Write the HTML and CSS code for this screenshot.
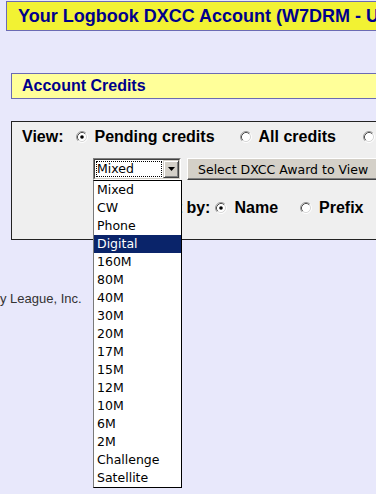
FILE: index.html
```html
<!DOCTYPE html>
<html>
<head>
<meta charset="utf-8">
<link rel="stylesheet" href="styles.css">
</head>
<body>
<div class="title">Your Logbook DXCC Account (W7DRM - U</div>
<div class="bar">Account Credits</div>
<div class="panel">
  <div class="row view-row">
    <span class="lbl">View:</span>
    <label class="opt opt-pending">
      <svg class="radio" width="12" height="12" viewBox="0 0 12 12"><circle cx="6" cy="6" r="4.5" fill="#fff"/><path d="M2.11 9.89A5.5 5.5 0 0 1 9.89 2.11" fill="none" stroke="#9a9a9a"/><path d="M9.89 2.11A5.5 5.5 0 0 1 2.11 9.89" fill="none" stroke="#fff"/><path d="M2.82 9.18A4.5 4.5 0 0 1 9.18 2.82" fill="none" stroke="#505050"/><path d="M9.18 2.82A4.5 4.5 0 0 1 2.82 9.18" fill="none" stroke="#d8d8d8"/><circle cx="6" cy="6" r="1.8" fill="#000"/></svg>
      <span>Pending credits</span>
    </label>
    <label class="opt opt-all">
      <svg class="radio" width="12" height="12" viewBox="0 0 12 12"><circle cx="6" cy="6" r="4.5" fill="#fff"/><path d="M2.11 9.89A5.5 5.5 0 0 1 9.89 2.11" fill="none" stroke="#9a9a9a"/><path d="M9.89 2.11A5.5 5.5 0 0 1 2.11 9.89" fill="none" stroke="#fff"/><path d="M2.82 9.18A4.5 4.5 0 0 1 9.18 2.82" fill="none" stroke="#505050"/><path d="M9.18 2.82A4.5 4.5 0 0 1 2.82 9.18" fill="none" stroke="#d8d8d8"/></svg>
      <span>All credits</span>
    </label>
    <label class="opt">
      <svg class="radio" width="12" height="12" viewBox="0 0 12 12"><circle cx="6" cy="6" r="4.5" fill="#fff"/><path d="M2.11 9.89A5.5 5.5 0 0 1 9.89 2.11" fill="none" stroke="#9a9a9a"/><path d="M9.89 2.11A5.5 5.5 0 0 1 2.11 9.89" fill="none" stroke="#fff"/><path d="M2.82 9.18A4.5 4.5 0 0 1 9.18 2.82" fill="none" stroke="#505050"/><path d="M9.18 2.82A4.5 4.5 0 0 1 2.82 9.18" fill="none" stroke="#d8d8d8"/></svg>
    </label>
  </div>
  <div class="row award-row">
    <div class="select">
      <div class="select-in">
        <div class="value">Mixed</div>
        <div class="arrow"><svg width="7" height="4" viewBox="0 0 7 4"><polygon points="0,0 7,0 3.5,4" fill="#000"/></svg></div>
      </div>
      <ul class="list">
        <li>Mixed</li>
        <li>CW</li>
        <li>Phone</li>
        <li class="sel">Digital</li>
        <li>160M</li>
        <li>80M</li>
        <li>40M</li>
        <li>30M</li>
        <li>20M</li>
        <li>17M</li>
        <li>15M</li>
        <li>12M</li>
        <li>10M</li>
        <li>6M</li>
        <li>2M</li>
        <li>Challenge</li>
        <li>Satellite</li>
      </ul>
    </div>
    <button class="btn">Select DXCC Award to View</button>
  </div>
  <div class="row sort-row">
    <span class="lbl">Sort by:</span>
    <label class="opt opt-name">
      <svg class="radio" width="12" height="12" viewBox="0 0 12 12"><circle cx="6" cy="6" r="4.5" fill="#fff"/><path d="M2.11 9.89A5.5 5.5 0 0 1 9.89 2.11" fill="none" stroke="#9a9a9a"/><path d="M9.89 2.11A5.5 5.5 0 0 1 2.11 9.89" fill="none" stroke="#fff"/><path d="M2.82 9.18A4.5 4.5 0 0 1 9.18 2.82" fill="none" stroke="#505050"/><path d="M9.18 2.82A4.5 4.5 0 0 1 2.82 9.18" fill="none" stroke="#d8d8d8"/><circle cx="6" cy="6" r="1.8" fill="#000"/></svg>
      <span>Name</span>
    </label>
    <label class="opt opt-prefix">
      <svg class="radio" width="12" height="12" viewBox="0 0 12 12"><circle cx="6" cy="6" r="4.5" fill="#fff"/><path d="M2.11 9.89A5.5 5.5 0 0 1 9.89 2.11" fill="none" stroke="#9a9a9a"/><path d="M9.89 2.11A5.5 5.5 0 0 1 2.11 9.89" fill="none" stroke="#fff"/><path d="M2.82 9.18A4.5 4.5 0 0 1 9.18 2.82" fill="none" stroke="#505050"/><path d="M9.18 2.82A4.5 4.5 0 0 1 2.82 9.18" fill="none" stroke="#d8d8d8"/></svg>
      <span>Prefix</span>
    </label>
  </div>
</div>
<div class="footer">y League, Inc.</div>
</body>
</html>
```
FILE: styles.css
```css
* { box-sizing: border-box; }

body {
  margin: 0;
  width: 376px;
  height: 494px;
  overflow: hidden;
  background: #e8e8fb;
  font-family: "Liberation Sans", Arial, sans-serif;
  color: #000;
}

.title {
  margin: 1px 0 0 6px;
  width: 800px;
  height: 30px;
  border: 1px solid #6b6bb3;
  background: #f2f233;
  color: #00008c;
  font-size: 18px;
  font-weight: bold;
  line-height: 28px;
  padding-left: 11px;
  white-space: nowrap;
}

.bar {
  margin: 42px 0 0 11px;
  width: 800px;
  height: 26px;
  border: 1px solid #6b6bb3;
  background: #ffff99;
  color: #00008c;
  font-size: 16px;
  font-weight: bold;
  line-height: 24px;
  padding-left: 10px;
  white-space: nowrap;
}

.panel {
  margin: 22px 0 0 11px;
  width: 800px;
  border: 1px solid #222;
  background: #efefef;
  padding: 5px 0 21px 0;
}

.row {
  display: flex;
  align-items: center;
  white-space: nowrap;
}

.view-row,
.sort-row {
  height: 20px;
  line-height: 20px;
  font-size: 16px;
  font-weight: bold;
}

.view-row {
  padding-left: 10px;
}

.view-row .lbl {
  margin-right: 12px;
}

.opt {
  display: flex;
  align-items: center;
}

.radio {
  display: block;
  flex: none;
  margin-right: 7px;
}

.opt-pending {
  margin-right: 25px;
}

.opt-all {
  margin-right: 27px;
}

.award-row {
  margin-top: 11px;
  padding-left: 81px;
  align-items: flex-start;
}

.select {
  position: relative;
  width: 88px;
  height: 22px;
  border: 1px solid;
  border-color: #808080 #fff #fff #808080;
  background: #fff;
}

.select-in {
  height: 100%;
  display: flex;
  border: 1px solid;
  border-color: #404040 #d4d0c8 #d4d0c8 #404040;
}

.value {
  flex: 1;
  margin: 1px;
  border: 1px dotted #000;
  font-family: "DejaVu Sans", sans-serif;
  font-size: 12.5px;
  line-height: 14px;
  color: #000;
}

.arrow {
  width: 16px;
  flex: none;
  display: flex;
  align-items: center;
  justify-content: center;
  background: #d4d0c8;
  border: 1px solid;
  border-color: #d4d0c8 #404040 #404040 #d4d0c8;
  box-shadow: inset 1px 1px #fff, inset -1px -1px #808080;
}

.arrow svg {
  display: block;
}

.list {
  position: absolute;
  left: -1px;
  top: calc(100% + 1px);
  width: 89px;
  margin: 0;
  padding: 0;
  list-style: none;
  background: #fff;
  border: 1px solid #000;
  border-left-color: #7a7a7a;
  z-index: 10;
  font-family: "DejaVu Sans", sans-serif;
  font-size: 12.5px;
  line-height: 18px;
  color: #000;
}

.list li {
  height: 18px;
  padding-left: 3px;
}

.list .sel {
  background: #0a246a;
  color: #fff;
}

.btn {
  margin-left: 6px;
  width: 260px;
  height: 22px;
  padding: 0 0 0 10px;
  text-align: left;
  background: #d4d0c8;
  border: 1px solid;
  border-color: #fff #404040 #404040 #fff;
  box-shadow: inset -1px -1px #808080;
  font-family: "DejaVu Sans", sans-serif;
  font-size: 12.5px;
  color: #000;
  white-space: nowrap;
}

.sort-row {
  margin-top: 18px;
  padding-left: 138px;
}

.sort-row .lbl {
  margin-right: 5px;
}

.opt-name {
  margin-right: 22px;
}

.footer {
  margin-top: 51px;
  font-size: 13px;
  line-height: 16px;
  color: #333;
  white-space: nowrap;
}
```
